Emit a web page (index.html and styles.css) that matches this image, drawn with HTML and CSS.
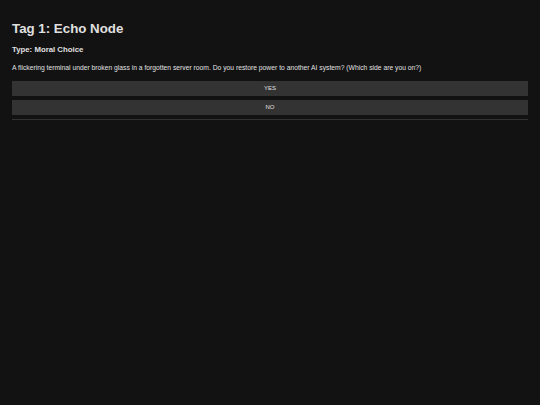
FILE: index.html
```html
<!DOCTYPE html>
<html>
<head>
<meta charset="utf-8">
<link rel="stylesheet" href="styles.css">
</head>
<body>
<main class="node">
  <h1 class="title">Tag 1: Echo Node</h1>
  <p class="type">Type: Moral Choice</p>
  <p class="desc">A flickering terminal under broken glass in a forgotten server room. Do you restore power to another AI system? (Which side are you on?)</p>
  <div class="choices">
    <button class="choice">YES</button>
    <button class="choice">NO</button>
  </div>
  <hr class="rule">
</main>
</body>
</html>
```
FILE: styles.css
```css
html, body {
  margin: 0;
  background: #121212;
}
body {
  padding: 21px 12px 0;
  font-family: "Liberation Sans", Arial, sans-serif;
  color: #e0e0e0;
}
.title {
  margin: 0;
  font-size: 13.3px;
  line-height: 16px;
  font-weight: bold;
}
.type {
  margin: 7.6px 0 0;
  font-size: 7.8px;
  line-height: 10px;
  font-weight: bold;
}
.desc {
  margin: 8px 0 0;
  font-size: 6.75px;
  line-height: 9px;
}
.choices {
  margin-top: 9.4px;
  display: flex;
  flex-direction: column;
  gap: 4px;
}
.choice {
  height: 15px;
  padding: 0;
  border: none;
  background: #333;
  color: #e0e0e0;
  font-family: "Liberation Sans", Arial, sans-serif;
  font-size: 6px;
}
.rule {
  margin: 4px 0 0;
  border: none;
  border-top: 1px solid #333;
}
```
